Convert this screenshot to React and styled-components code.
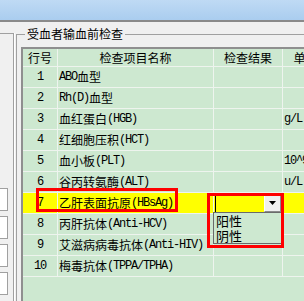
import React from 'react';
import styled, { createGlobalStyle } from 'styled-components';

const Global = createGlobalStyle`
  html, body { margin: 0; padding: 0; background: #f0f0f0; }
  body {
    font-family: "Noto Sans CJK SC", "Liberation Sans", sans-serif;
    font-size: 12px;
    color: #000;
  }
`;

const Screen = styled.div`
  position: relative;
  width: 304px;
  height: 301px;
  overflow: hidden;
  background: #f0f0f0;
  display: flex;
  flex-direction: column;
`;

const TitleBand = styled.div`
  flex: none;
  height: 20px;
  background: linear-gradient(#bfdaf4, #aacdef);
  border-bottom: 2px solid #8a8a8a;
`;

const Body = styled.div`
  flex: 1;
  min-height: 0;
  display: flex;
`;

const LeftPanel = styled.div`
  flex: none;
  width: 13px;
  margin-top: 11px;
  padding-top: 154px;
  border-top: 1px solid #a0a0a0;
  border-right: 1px solid #a0a0a0;
  box-shadow: 1px 0 0 #ffffff;
  display: flex;
  flex-direction: column;
  gap: 5px;
  overflow: hidden;
`;

const TextBox = styled.div`
  flex: none;
  box-sizing: border-box;
  width: 18px;
  height: 23px;
  margin-left: -10px;
  background: #ffffff;
  border: 1px solid #a0a0a0;
`;

const GroupFrame = styled.fieldset`
  flex: 1;
  min-width: 0;
  margin: 5px 0 0 2px;
  padding: 0;
  border: 1px solid #a0a0a0;
  border-right: none;
  border-bottom: none;
`;

const Caption = styled.legend`
  margin-left: 8px;
  padding: 0 2px;
  font-size: 12px;
  line-height: 14px;
`;

const Grid = styled.div`
  margin: 6px 0 0 4px;
  width: 400px;
  height: 260px;
  display: grid;
  grid-template-columns: 35px 156px 69px 46px 80px;
  grid-template-rows: 18px;
  grid-auto-rows: 21px;
  align-content: start;
  background: #cde8d0;
  border-top: 2px solid #8f8f8f;
  border-left: 2px solid #8f8f8f;
`;

const Cell = styled.div`
  position: relative;
  box-sizing: border-box;
  display: flex;
  align-items: center;
  justify-content: ${p => (p.$center ? 'center' : 'flex-start')};
  padding: 0 1px;
  line-height: 14px;
  white-space: nowrap;
  overflow: ${p => (p.$open ? 'visible' : 'hidden')};
  background: ${p => (p.$hl ? '#ffff00' : 'transparent')};
  border-right: 1px solid #eef4ee;
  border-bottom: 1px solid #eef4ee;
  z-index: ${p => (p.$open ? 2 : 'auto')};
`;

const Latin = styled.span`
  font-family: "Liberation Mono", monospace;
  font-size: 12px;
  letter-spacing: -1.2px;
`;

const Caret = styled.div`
  flex: none;
  width: 1px;
  height: 17px;
  background: #000;
`;

const DropButton = styled.div`
  flex: none;
  box-sizing: border-box;
  width: 17px;
  height: 17px;
  margin-left: auto;
  background: #f0f0f0;
  border: 1px solid;
  border-color: #ffffff #8a8a8a #8a8a8a #ffffff;
  display: flex;
  align-items: center;
  justify-content: center;
`;

const DropList = styled.div`
  position: absolute;
  left: -1px;
  top: 19px;
  box-sizing: border-box;
  width: 69px;
  height: 32px;
  padding: 0 0 0 1px;
  background: #cde8d0;
  border: 1px solid #6a6a6a;
  display: flex;
  flex-direction: column;
`;

const DropItem = styled.div`
  height: 15px;
  line-height: 15px;
  font-size: 13px;
  padding-left: 1px;
`;

const RedMark = styled.div`
  position: absolute;
  box-sizing: border-box;
  border: 3px solid #ff0000;
  pointer-events: none;
  z-index: 5;
`;

function Mixed({ text }) {
  const parts = text.split(/([\x00-\x7f]+)/).filter(Boolean);
  return parts.map((p, i) =>
    /^[\x00-\x7f]+$/.test(p) ? (
      <Latin key={i}>{p}</Latin>
    ) : (
      <React.Fragment key={i}>{p}</React.Fragment>
    )
  );
}

const rows = [
  { no: '1', name: 'ABO血型', unit: '' },
  { no: '2', name: 'Rh(D)血型', unit: '' },
  { no: '3', name: '血红蛋白(HGB)', unit: 'g/L' },
  { no: '4', name: '红细胞压积(HCT)', unit: '' },
  { no: '5', name: '血小板(PLT)', unit: '10^9/L' },
  { no: '6', name: '谷丙转氨酶(ALT)', unit: 'u/L' },
  { no: '7', name: '乙肝表面抗原(HBsAg)', unit: '', active: true },
  { no: '8', name: '丙肝抗体(Anti-HCV)', unit: '' },
  { no: '9', name: '艾滋病病毒抗体(Anti-HIV)', unit: '' },
  { no: '10', name: '梅毒抗体(TPPA/TPHA)', unit: '' },
];

function Combo() {
  return (
    <>
      <Caret />
      <DropButton>
        <svg width="7" height="4" viewBox="0 0 7 4">
          <path d="M0 0H7L3.5 4Z" fill="#000" />
        </svg>
      </DropButton>
      <DropList>
        <DropItem>阳性</DropItem>
        <DropItem>阴性</DropItem>
      </DropList>
    </>
  );
}

export default function App() {
  return (
    <Screen>
      <Global />
      <TitleBand />
      <Body>
        <LeftPanel>
          <TextBox />
          <TextBox />
          <TextBox />
          <TextBox />
        </LeftPanel>
        <GroupFrame>
          <Caption>受血者输血前检查</Caption>
          <Grid>
            <Cell $center>行号</Cell>
            <Cell $center>检查项目名称</Cell>
            <Cell $center>检查结果</Cell>
            <Cell $center>单位</Cell>
            <Cell />
            {rows.map(r => (
              <React.Fragment key={r.no}>
                <Cell $center $hl={r.active}>
                  <Mixed text={r.no} />
                </Cell>
                <Cell $hl={r.active}>
                  <Mixed text={r.name} />
                </Cell>
                <Cell $hl={r.active} $open={r.active}>
                  {r.active ? <Combo /> : null}
                </Cell>
                <Cell $hl={r.active}>
                  <Mixed text={r.unit} />
                </Cell>
                <Cell $hl={r.active} />
              </React.Fragment>
            ))}
          </Grid>
        </GroupFrame>
      </Body>
      <RedMark style={{ left: 36, top: 188, width: 142, height: 24 }} />
      <RedMark style={{ left: 207, top: 193, width: 77, height: 55 }} />
    </Screen>
  );
}
